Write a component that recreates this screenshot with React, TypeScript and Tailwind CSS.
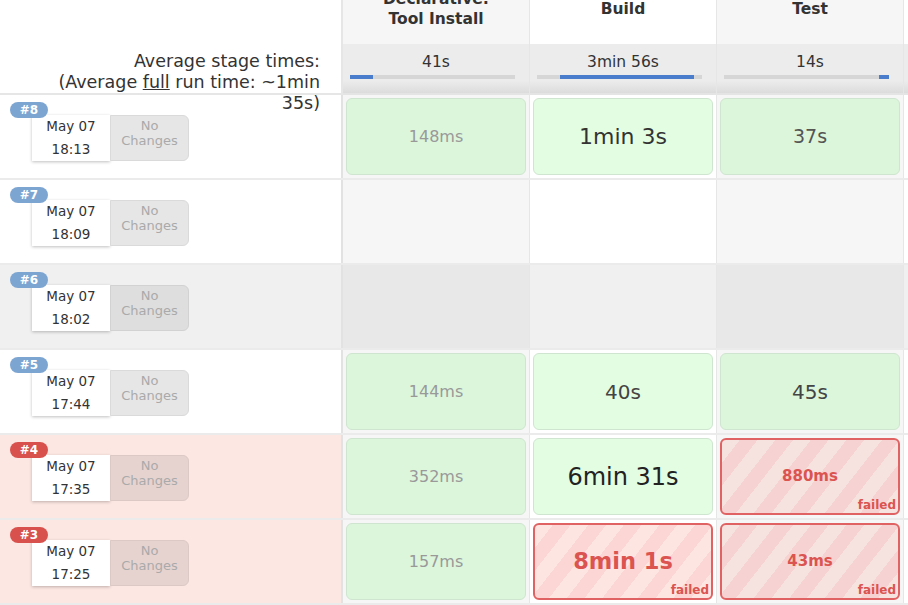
import React from "react";

type Cell =
  | { kind: "ok"; text: string; cls: string }
  | { kind: "failed"; text: string; cls: string }
  | { kind: "none" };

type Run = {
  id: number;
  date: string;
  time: string;
  status: "ok" | "none" | "aborted" | "failed";
  cells: Cell[];
};

const stages = [
  { name: ["Declarative:", "Tool Install"], avg: "41s", bar: [0, 14] },
  { name: ["Build"], avg: "3min 56s", bar: [14, 95] },
  { name: ["Test"], avg: "14s", bar: [94, 100] },
  { name: [""], avg: "", bar: null as number[] | null },
];

const runs: Run[] = [
  {
    id: 8, date: "May 07", time: "18:13", status: "ok",
    cells: [
      { kind: "ok", text: "148ms", cls: "text-[16px] text-[#999]" },
      { kind: "ok", text: "1min 3s", cls: "text-[22px] text-[#333]" },
      { kind: "ok", text: "37s", cls: "text-[19px] text-[#555]" },
    ],
  },
  { id: 7, date: "May 07", time: "18:09", status: "none", cells: [] },
  { id: 6, date: "May 07", time: "18:02", status: "aborted", cells: [] },
  {
    id: 5, date: "May 07", time: "17:44", status: "ok",
    cells: [
      { kind: "ok", text: "144ms", cls: "text-[16px] text-[#999]" },
      { kind: "ok", text: "40s", cls: "text-[20px] text-[#444]" },
      { kind: "ok", text: "45s", cls: "text-[20px] text-[#444]" },
    ],
  },
  {
    id: 4, date: "May 07", time: "17:35", status: "failed",
    cells: [
      { kind: "ok", text: "352ms", cls: "text-[16px] text-[#999]" },
      { kind: "ok", text: "6min 31s", cls: "text-[24px] text-[#222]" },
      { kind: "failed", text: "880ms", cls: "text-[15px]" },
    ],
  },
  {
    id: 3, date: "May 07", time: "17:25", status: "failed",
    cells: [
      { kind: "ok", text: "157ms", cls: "text-[16px] text-[#999]" },
      { kind: "failed", text: "8min 1s", cls: "text-[22.5px]" },
      { kind: "failed", text: "43ms", cls: "text-[15px]" },
    ],
  },
];

const colBg = ["bg-[#f6f6f6]", "bg-white", "bg-[#f6f6f6]", "bg-white"];
const colBgGray = ["bg-[#e8e8e8]", "bg-[#f0f0f0]", "bg-[#e8e8e8]", "bg-[#f0f0f0]"];

const leftBg = {
  ok: "bg-white",
  none: "bg-white",
  aborted: "bg-[#f0f0f0]",
  failed: "bg-[#fde7e3]",
};

function StageBox({ cell, col }: { cell: Cell; col: number }) {
  if (cell.kind === "none") return null;
  if (cell.kind === "ok") {
    return (
      <div
        className={`h-full rounded-[6px] border border-[#cfe5cf] flex items-center justify-center ${
          col === 1 ? "bg-[#e3fde3]" : "bg-[#dcf6dc]"
        }`}
      >
        <span className={cell.cls}>{cell.text}</span>
      </div>
    );
  }
  return (
    <div
      className={`relative h-full rounded-[6px] border-2 border-[#e06262] flex items-center justify-center ${
        col === 1
          ? "bg-[repeating-linear-gradient(128deg,#fde6e2_0px,#fde6e2_14px,#fbd6d5_14px,#fbd6d5_28px)]"
          : "bg-[repeating-linear-gradient(128deg,#f6e3df_0px,#f6e3df_14px,#f6d2d2_14px,#f6d2d2_28px)]"
      }`}
    >
      <span className={`font-bold text-[#db5450] ${cell.cls}`}>{cell.text}</span>
      <span className="absolute right-[2px] bottom-[1px] text-[12px] leading-[14px] font-bold text-[#db5450]">
        failed
      </span>
    </div>
  );
}

function RunRow({ run }: { run: Run }) {
  const bgs = run.status === "aborted" ? colBgGray : colBg;
  const badge = run.status === "failed" ? "bg-[#d8514c]" : "bg-[#7da5d2]";
  const noChanges =
    run.status === "failed"
      ? "bg-[#e6d3d0] border-[#dcc8c5]"
      : run.status === "aborted"
      ? "bg-[#dedede] border-[#d2d2d2]"
      : "bg-[#e6e6e6] border-[#dadada]";
  return (
    <div className="flex h-[85px] border-b-2 border-[#ebebeb]">
      <div className={`relative w-[343px] shrink-0 border-r-2 border-[#e2e2e2] pl-[32px] pt-[20px] ${leftBg[run.status]}`}>
        <div
          className={`absolute left-[10px] top-[7px] z-10 w-[38px] h-[16px] rounded-full ${badge} text-white text-[12px] font-bold leading-[16px] text-center`}
        >
          #{run.id}
        </div>
        <div className="flex h-[46px] w-[157px]">
          <div className="w-[78px] bg-white shadow-[0_1px_3px_rgba(0,0,0,0.25)] flex flex-col items-center justify-center text-[13.5px] leading-[23px] text-[#333]">
            <span>{run.date}</span>
            <span>{run.time}</span>
          </div>
          <div
            className={`w-[79px] rounded-r-[6px] border ${noChanges} pt-[2px] text-center text-[13px] leading-[15px] text-[#aaa]`}
          >
            No
            <br />
            Changes
          </div>
        </div>
      </div>
      {stages.map((_, i) => (
        <div key={i} className={`w-[187px] shrink-0 border-r border-[#e6e6e6] p-[3px] ${bgs[i]}`}>
          {run.cells[i] && <StageBox cell={run.cells[i]} col={i} />}
        </div>
      ))}
    </div>
  );
}

export default function App() {
  return (
    <div
      className="w-[908px] h-[605px] overflow-hidden bg-white text-[#333]"
      style={{ fontFamily: '"DejaVu Sans", "Open Sans", sans-serif' }}
    >
      <div className="-mt-[26px]">
        <div className="flex">
          <div className="relative z-20 w-[343px] h-[121px] shrink-0 border-r-2 border-b-2 border-[#e6e6e6] bg-white pt-[77px] pr-[21px] text-right text-[17.5px] leading-[21px] text-[#333]">
            <div>Average stage times:</div>
            <div>
              (Average <span className="underline">full</span> run time: ~1min
            </div>
            <div>35s)</div>
          </div>
          {stages.map((s, i) => (
            <div key={i} className="w-[187px] shrink-0 flex flex-col border-r border-[#e6e6e6]">
              <div
                className={`h-[70px] flex flex-col items-center justify-center text-[15.5px] font-bold leading-[20px] text-[#333] ${colBg[i]}`}
              >
                {s.name.map((n, j) => (
                  <span key={j}>{n}</span>
                ))}
              </div>
              <div className="h-[51px] bg-[linear-gradient(#ececec_75%,#dcdcdc)] pt-[8px] border-b-2 border-[#e4e4e4]">
                <div className="text-center text-[15.5px] leading-[20px] text-[#333]">{s.avg}</div>
                {s.bar && (
                  <div className="relative mt-[3px] ml-[7px] mr-[14px] h-[4px] bg-[#d6d6d6]">
                    <div
                      className="absolute top-0 h-[4px] bg-[#4a7dcc]"
                      style={{ left: `${s.bar[0]}%`, width: `${s.bar[1] - s.bar[0]}%` }}
                    />
                  </div>
                )}
              </div>
            </div>
          ))}
        </div>
        {runs.map((r) => (
          <RunRow key={r.id} run={r} />
        ))}
      </div>
    </div>
  );
}
